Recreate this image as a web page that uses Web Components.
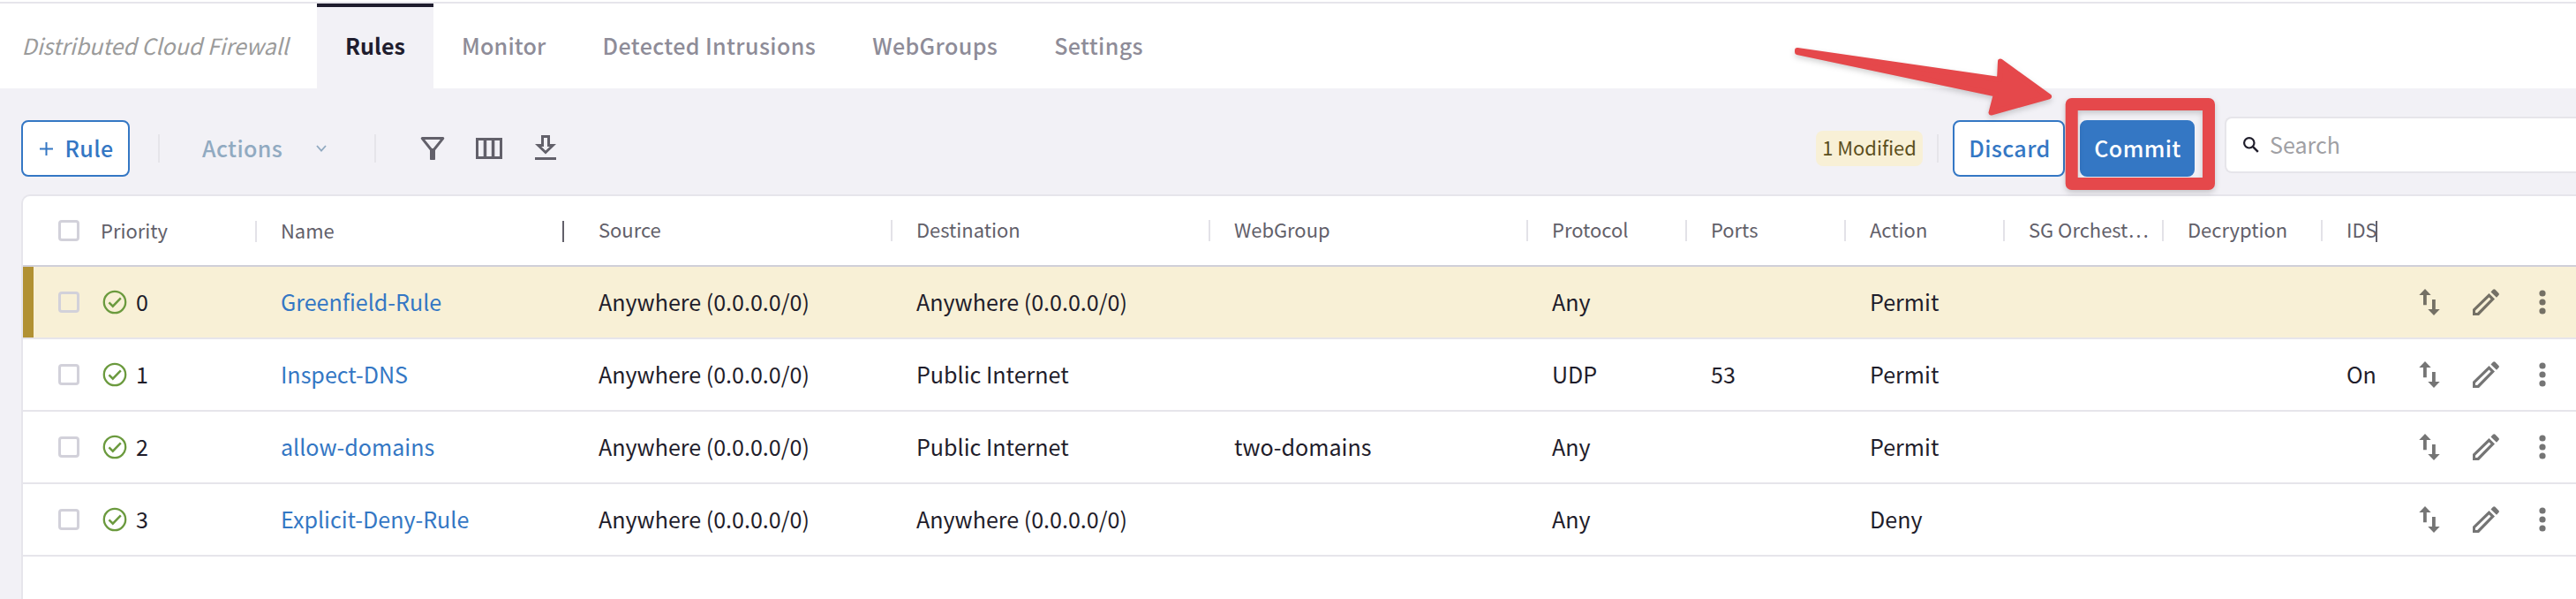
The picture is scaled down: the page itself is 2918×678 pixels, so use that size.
<!DOCTYPE html>
<html lang="en">
<head>
<meta charset="utf-8">
<title>Distributed Cloud Firewall</title>
<style>
html,body{margin:0;padding:0}
body{width:2918px;height:678px;overflow:hidden;background:#f2f1f6;color:#1f1d2b;font-family:"Noto Sans CJK SC","Noto Sans",sans-serif;font-size:25.07px}
</style>
</head>
<body>
<firewall-page></firewall-page>
<script>
const ICONS = {
  plus: [15,15,'<path d="M7.500 0v15M0 7.500h15" stroke="currentColor" stroke-width="2" fill="none"/>'],
  chevron: [14,10,'<path d="M2 2l5 5.600L12 2" stroke="currentColor" stroke-width="1.800" fill="none"/>'],
  filter: [28,28,'<path d="M2.200 2.600h23.600L15.500 15.500h-3z" fill="none" stroke="currentColor" stroke-width="3" stroke-linejoin="round"/><path d="M11 14h6v12.200q0 .8-.8.8h-4.400q-.8 0-.8-.8z" fill="currentColor"/>'],
  columns: [30,24,'<path fill="currentColor" fill-rule="evenodd" d="M0 0h30v24H0zM3 3v18h5.700V3zM12.200 3v18h5.600V3zM21.300 3v18H27V3z"/>'],
  download: [24,28,'<path fill="currentColor" fill-rule="evenodd" d="M7 0h10v10h7L12 21.500 0 10h7zM10 3v10H7.200L12 17.500 16.800 13H14V3zM0 25h24v3H0z"/>'],
  search: [18,18,'<circle cx="6.800" cy="6.800" r="5.700" fill="none" stroke="currentColor" stroke-width="2.200"/><path d="M10.800 10.800l6 6" stroke="currentColor" stroke-width="2.500"/>'],
  check: [28,28,'<circle cx="14" cy="14" r="12.200" fill="none" stroke="currentColor" stroke-width="2.300"/><path d="M7.500 14.400l4.300 4.300 9-9.300" fill="none" stroke="currentColor" stroke-width="2.500"/>'],
  swap: [24,30,'<path fill="currentColor" d="M7 0l6.700 7H8.800v11.200H5V7H.3zM17 30l-6.700-7H15V12h3.800v11h4.900z"/>'],
  pencil: [30,30,'<path fill="currentColor" fill-rule="evenodd" d="M0 30v-7L18.500 5l6.500 6.500L7 30zM3 27h2.200L20.500 11.500 18.500 9.500 3 24.500zM20.500 3.500L23 .8q1.200-1.200 2.500 0l3.800 3.900q1.200 1.200 0 2.500L27 9.800z"/>'],
  dots: [8,28,'<circle cx="4" cy="4" r="3.600" fill="currentColor"/><circle cx="4" cy="14" r="3.600" fill="currentColor"/><circle cx="4" cy="24" r="3.600" fill="currentColor"/>']
};

function define(name, render) {
  customElements.define(name, class extends HTMLElement {
    connectedCallback() {
      if (this.shadowRoot) return;
      this.attachShadow({ mode: 'open' }).innerHTML = render(this);
    }
  });
}

define('ui-icon', el => {
  const [w, h, body] = ICONS[el.getAttribute('name')];
  return `<style>:host{display:block;flex:none;width:${w}px;height:${h}px}svg{display:block}</style>
  <svg width="${w}" height="${h}" viewBox="0 0 ${w} ${h}">${body}</svg>`;
});

define('nav-tab', () => `<style>
  :host{display:block;box-sizing:border-box;height:96px;padding:0 32px;line-height:94px;font-weight:500;color:#8e8c98;white-space:nowrap;border-top:0 solid #1f1d2e}
  :host([active]){background:#f2f1f6;color:#1f1d2e;font-weight:700;border-top-width:4px;line-height:86px}
  </style><slot></slot>`);

define('tab-bar', () => `<style>
  :host{display:flex;box-sizing:border-box;height:100px;padding-top:2px;background:#fff}
  .in{display:flex;flex:1;border-top:2px solid #e6e5eb}
  .title{box-sizing:border-box;width:359px;padding-left:24.500px;line-height:94px;font-style:italic;letter-spacing:-.04px;color:#9b9b9b;white-space:nowrap}
  </style><div class="in"><div class="title">Distributed Cloud Firewall</div><slot></slot></div>`);

define('ui-button', () => `<style>
  :host{display:flex;flex:none;box-sizing:border-box;height:64px;align-items:center;justify-content:center;border:2px solid #3477c4;border-radius:8px;background:#fff;color:#3477c4;font-weight:500;line-height:58px;padding-bottom:2px;white-space:nowrap;letter-spacing:.4px}
  :host([primary]){background:#3477c4;color:#fff}
  </style><slot></slot>`);

define('tool-row', () => `<style>
  :host{display:flex;box-sizing:border-box;height:120px;padding:36px 0 0 24px;align-items:flex-start}
  .mid{display:flex;align-items:center;height:64px;flex:none}
  .sep{flex:none;width:2px;height:32px;background:#e6e5ea}
  ui-icon{color:#62606a}
  .rule{width:123px;gap:13px;padding-left:3px}.rule ui-icon{color:#3477c4;margin-top:2px}
  .actions{display:flex;align-items:center;width:191px;padding-left:48px;box-sizing:border-box;color:#91aac1;font-weight:500;line-height:62px;padding-bottom:2px;letter-spacing:.4px}
  .actions ui-icon{margin:2px 1px 0 auto;color:#91aac1}
  .badge{background:#f8f0d6;color:#5c4f1d;border-radius:8px;height:40px;line-height:38px;width:121px;text-align:center;font-size:21.940px}
  .search{display:flex;align-items:center;box-sizing:border-box;width:398px;height:64px;margin-top:-4px;border:2px solid #e6e5ea;border-right:0;border-radius:8px 0 0 8px;background:#fff;padding:0 0 2px 19px;gap:12px;color:#a0a0a4;line-height:58px}
  .search ui-icon{color:#1f1d2b;margin-top:1px}
  .right{margin-left:auto}
  </style>
  <div class="mid"><ui-button class="rule"><ui-icon name="plus"></ui-icon>Rule</ui-button>
  <div class="sep" style="margin-left:32px"></div>
  <div class="actions">Actions<ui-icon name="chevron"></ui-icon></div>
  <div class="sep" style="margin-left:52px"></div>
  <ui-icon name="filter" style="margin-left:50px"></ui-icon>
  <ui-icon name="columns" style="margin-left:35px"></ui-icon>
  <ui-icon name="download" style="margin:0 0 2px 37px"></ui-icon></div>
  <div class="mid right"><div class="badge">1 Modified</div>
  <div class="sep" style="margin:0 16px"></div>
  <ui-button style="width:127px;padding-left:2px">Discard</ui-button>
  <ui-button primary style="width:130px;margin:0 34px 0 17px;padding-left:1px">Commit</ui-button></div>
  <div class="search"><ui-icon name="search"></ui-icon>Search</div>`);

const GRID = 'display:grid;grid-template-columns:264px repeat(4,360px) repeat(5,180px) 98px 1fr;';

define('check-box', () => `<style>:host{display:block;flex:none;box-sizing:border-box;width:24px;height:24px;border:3px solid #d2d1da;border-radius:4px}</style>`);

define('head-cell', el => `<style>
  :host{display:flex;align-items:center;position:relative;padding-left:28px;font-size:21.940px;color:#62606a;line-height:76px;height:78px;white-space:nowrap}
  .t{margin-top:-2px}
  i{position:absolute;right:-1px;top:27px;width:2px;height:24px;background:#e3e2e8}
  :host([pinned]) i{right:11px;top:28px;background:#62606a}
  :host([last]) i{right:35px;top:28px;background:#62606a}
  :host([first]){padding-left:40px}
  :host([first]) i{top:28px}
  :host([first]) .t,:host([pinned]) .t{margin-top:0}
  :host([first]) .t{margin-left:24px}
  </style>${el.hasAttribute('first') ? '<check-box></check-box>' : ''}<span class="t"><slot></slot></span><i></i>`);

define('rule-row', el => {
  const v = el.getAttribute('values').split('|');
  return `<style>
  :host{${GRID}height:80px;border-bottom:2px solid #e6e5eb;line-height:78px;white-space:nowrap}
  :host([modified]){background:#f8f0d6;box-shadow:inset 12px 0 #b19133}
  .p{display:flex;align-items:center;padding-left:40px;height:80px}
  .p span{margin-top:-2px}
  .p ui-icon{color:#6b9a3e;margin:0 10px 0 26px}
  .c{padding-left:28px}
  .n{color:#3477c4}
  .a{display:flex;align-items:center;height:80px;padding-left:12px}
  .a ui-icon{color:#757575}
  :host([modified]) .a ui-icon{color:#747065}
  </style><div class="p"><check-box></check-box><ui-icon name="check"></ui-icon><span>${v[0]}</span></div>
  <div class="c n">${v[1]}</div>${v.slice(2).map(t => `<div class="c">${t}</div>`).join('')}
  <div class="a"><ui-icon name="swap"></ui-icon><ui-icon name="pencil" style="margin:0 45px 0 37px"></ui-icon><ui-icon name="dots"></ui-icon></div>`;
});

define('rules-table', () => `<style>
  :host{display:block;margin-left:24px;height:456px;border:solid #e6e5eb;border-width:2px 0 0 2px;border-radius:10px 0 0 0;background:#fff;overflow:hidden}
  .h{${GRID}height:78px;border-bottom:2px solid #d0cfd8}
  </style><div class="h"><head-cell first>Priority</head-cell><head-cell pinned>Name</head-cell><head-cell>Source</head-cell><head-cell>Destination</head-cell><head-cell>WebGroup</head-cell><head-cell>Protocol</head-cell><head-cell>Ports</head-cell><head-cell>Action</head-cell><head-cell>SG Orchest…</head-cell><head-cell>Decryption</head-cell><head-cell last>IDS</head-cell></div>
  <rule-row modified values="0|Greenfield-Rule|Anywhere (0.0.0.0/0)|Anywhere (0.0.0.0/0)||Any||Permit|||"></rule-row>
  <rule-row values="1|Inspect-DNS|Anywhere (0.0.0.0/0)|Public Internet||UDP|53|Permit|||On"></rule-row>
  <rule-row values="2|allow-domains|Anywhere (0.0.0.0/0)|Public Internet|two-domains|Any||Permit|||"></rule-row>
  <rule-row values="3|Explicit-Deny-Rule|Anywhere (0.0.0.0/0)|Anywhere (0.0.0.0/0)||Any||Deny|||"></rule-row>`);

define('callout-mark', () => `<style>
  :host{position:absolute;left:2020px;top:40px;width:500px;height:190px;filter:drop-shadow(0 3px 3px rgba(0,0,0,.18))}
  svg{display:block}</style>
  <svg width="500" height="190" viewBox="2020 40 500 190">
  <path fill="#e5484b" stroke="#e5484b" stroke-width="6" stroke-linejoin="round" d="M2036 57L2265 90 2266 69.500 2321 109.300 2255.500 127.500 2261 106.500 2036 59z"/>
  <rect x="2346.700" y="118" width="155.300" height="90" fill="none" stroke="#e5484b" stroke-width="14" stroke-linejoin="round"/></svg>`);

define('firewall-page', () => `<style>:host{display:block;position:relative;height:678px;overflow:hidden}</style>
  <tab-bar><nav-tab active>Rules</nav-tab><nav-tab style="letter-spacing:.2px">Monitor</nav-tab><nav-tab style="letter-spacing:.38px">Detected Intrusions</nav-tab><nav-tab style="letter-spacing:.38px">WebGroups</nav-tab><nav-tab style="letter-spacing:.38px">Settings</nav-tab></tab-bar>
  <tool-row></tool-row><rules-table></rules-table><callout-mark></callout-mark>`);
</script>
</body>
</html>
